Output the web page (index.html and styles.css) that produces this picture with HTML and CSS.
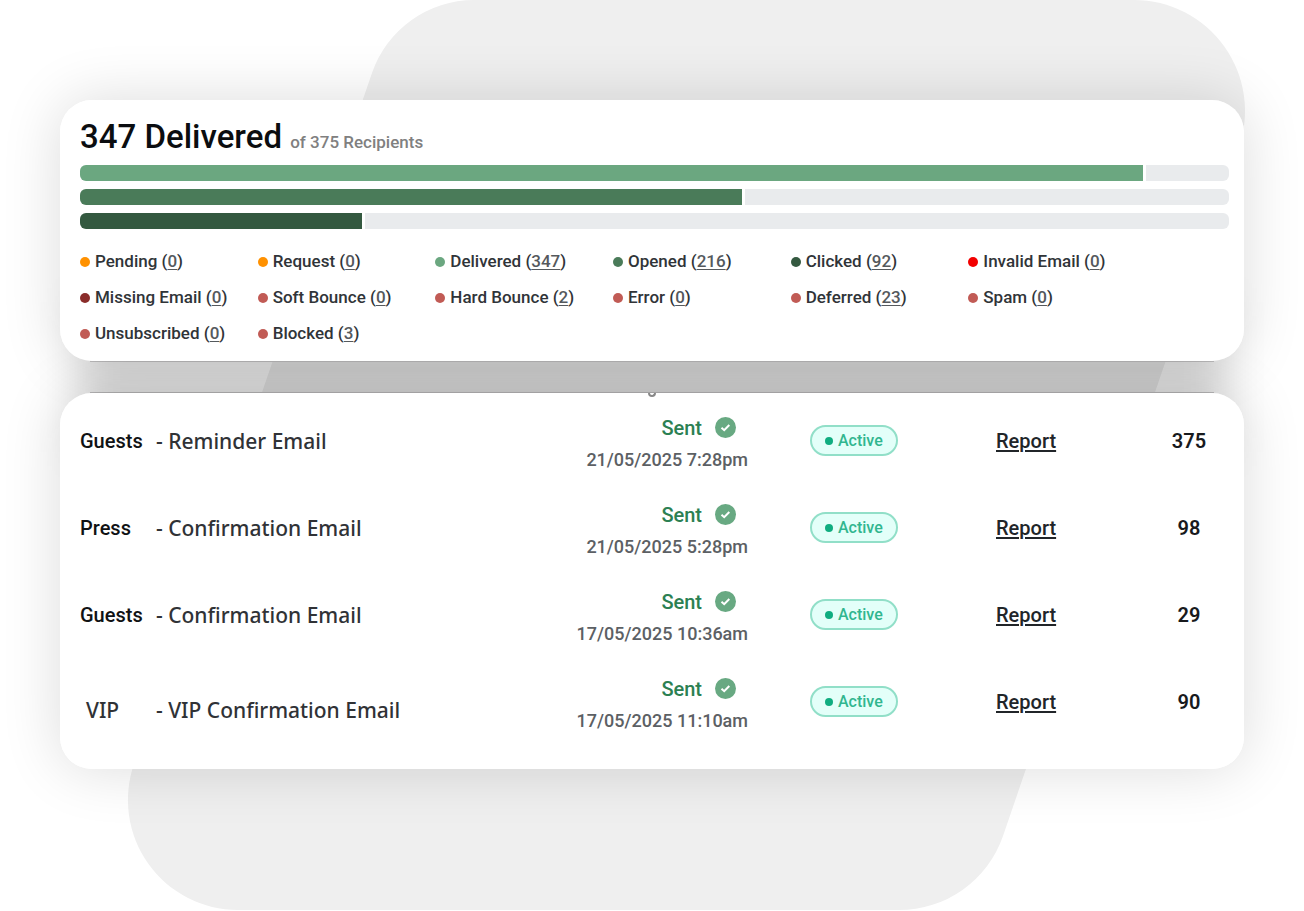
FILE: index.html
```html
<!DOCTYPE html>
<html lang="en">
<head>
    <meta charset="utf-8">
    <title>Email delivery report</title>
    <link rel="stylesheet" href="styles.css">
</head>
<body>
<div class="scene">
    <svg class="backdrop" viewBox="0 0 1304 911" preserveAspectRatio="none" aria-hidden="true">
        <path fill="#efefef" d="M474 0H1134A111 111 0 0 1 1239 147L1003 836A110 110 0 0 1 899 910H238A110 110 0 0 1 134 764L372 73A108 108 0 0 1 474 0Z"/>
    </svg>
    <main class="stack">
        <section class="card stats">
            <h1>347 Delivered <small>of 375 Recipients</small></h1>
            <div class="bars">
                <div class="bar"><div class="fill delivered" style="width:92.5%"></div></div>
                <div class="bar"><div class="fill opened" style="width:57.6%"></div></div>
                <div class="bar"><div class="fill clicked" style="width:24.5%"></div></div>
            </div>
            <ul class="legend">
                <li class="pending">Pending (<a href="#">0</a>)</li>
                <li class="pending">Request (<a href="#">0</a>)</li>
                <li class="delivered">Delivered (<a href="#">347</a>)</li>
                <li class="opened">Opened (<a href="#">216</a>)</li>
                <li class="clicked">Clicked (<a href="#">92</a>)</li>
                <li class="invalid">Invalid Email (<a href="#">0</a>)</li>
                <li class="missing">Missing Email (<a href="#">0</a>)</li>
                <li>Soft Bounce (<a href="#">0</a>)</li>
                <li>Hard Bounce (<a href="#">2</a>)</li>
                <li>Error (<a href="#">0</a>)</li>
                <li>Deferred (<a href="#">23</a>)</li>
                <li>Spam (<a href="#">0</a>)</li>
                <li>Unsubscribed (<a href="#">0</a>)</li>
                <li>Blocked (<a href="#">3</a>)</li>
            </ul>
        </section>
        <div class="gap"></div>
        <section class="card mails">
            <div class="tail"></div>
            <table>
                <tr>
                    <th scope="row">Guests</th>
                    <td class="subject">- Reminder Email</td>
                    <td class="sent">
                        <div class="state">Sent <svg viewBox="0 0 21 21"><circle cx="10.5" cy="10.5" r="10.5"/><path d="M6.5 10.8L9.2 13.2L14.3 8"/></svg></div>
                        <time>21/05/2025 7:28pm</time>
                    </td>
                    <td class="status"><span class="pill">Active</span></td>
                    <td class="report"><a href="#">Report</a></td>
                    <td class="count">375</td>
                </tr>
                <tr>
                    <th scope="row">Press</th>
                    <td class="subject">- Confirmation Email</td>
                    <td class="sent">
                        <div class="state">Sent <svg viewBox="0 0 21 21"><circle cx="10.5" cy="10.5" r="10.5"/><path d="M6.5 10.8L9.2 13.2L14.3 8"/></svg></div>
                        <time>21/05/2025 5:28pm</time>
                    </td>
                    <td class="status"><span class="pill">Active</span></td>
                    <td class="report"><a href="#">Report</a></td>
                    <td class="count">98</td>
                </tr>
                <tr>
                    <th scope="row">Guests</th>
                    <td class="subject">- Confirmation Email</td>
                    <td class="sent">
                        <div class="state">Sent <svg viewBox="0 0 21 21"><circle cx="10.5" cy="10.5" r="10.5"/><path d="M6.5 10.8L9.2 13.2L14.3 8"/></svg></div>
                        <time>17/05/2025 10:36am</time>
                    </td>
                    <td class="status"><span class="pill">Active</span></td>
                    <td class="report"><a href="#">Report</a></td>
                    <td class="count">29</td>
                </tr>
                <tr class="vip">
                    <th scope="row">VIP</th>
                    <td class="subject">- VIP Confirmation Email</td>
                    <td class="sent">
                        <div class="state">Sent <svg viewBox="0 0 21 21"><circle cx="10.5" cy="10.5" r="10.5"/><path d="M6.5 10.8L9.2 13.2L14.3 8"/></svg></div>
                        <time>17/05/2025 11:10am</time>
                    </td>
                    <td class="status"><span class="pill">Active</span></td>
                    <td class="report"><a href="#">Report</a></td>
                    <td class="count">90</td>
                </tr>
            </table>
        </section>
    </main>
</div>
</body>
</html>
```
FILE: styles.css
```css
* {
    box-sizing: border-box;
}
body {
    margin: 0;
    background: #fff;
    font-family: Roboto, "Liberation Sans", sans-serif;
    font-weight: 500;
    color: #212529;
}
a {
    color: inherit;
    text-underline-offset: 2px;
}
.scene {
    position: relative;
    min-height: 100vh;
    padding: 100px 60px 140px;
    overflow: hidden;
}
.backdrop {
    position: absolute;
    left: 0;
    top: 0;
    width: 100%;
    height: 100%;
}
.stack {
    position: relative;
    z-index: 0;
}
.card {
    position: relative;
    border-radius: 32px;
    background: #fff;
}
/* shadow sits behind both cards */
.card::before {
    content: "";
    position: absolute;
    z-index: -1;
    inset: 0;
    border-radius: 32px;
    box-shadow: 0 0 60px rgba(0,0,0,.14);
}
.gap {
    position: relative;
    z-index: -1;
    height: 32px;
    margin: 0 30px;
    border: solid #c8c7c8;
    border-width: 1px 0;
}
.gap::before {
    content: "";
    position: absolute;
    inset: -60px -10px;
    background: rgba(0,0,0,.13);
    filter: blur(20px);
}

.stats {
    padding: 16px 15px 10px 20px;
}
h1 {
    margin: 0;
    font-size: 33px;
    line-height: 42px;
    font-weight: 500;
    color: #0b0d10;
}
small {
    font-size: 17px;
    color: #808080;
}
.bars {
    display: grid;
    gap: 8px;
    margin-top: 2px;
}
.bar {
    height: 16px;
    border-radius: 6px;
    overflow: hidden;
    background: #e9ebed;
}
.fill {
    height: 100%;
    background: var(--c);
    box-shadow: 3px 0 #fff;
}
.legend {
    display: grid;
    grid-template-columns: repeat(6, 1fr);
    margin: 14px 0 0;
    padding: 0 83px 0 0;
    list-style: none;
    font-size: 17px;
    line-height: 36px;
    white-space: nowrap;
    color: #303438;
}
.legend a {
    color: #55595d;
}
.legend li {
    --c: #c15b55;
}
.legend li::before {
    content: "";
    display: inline-block;
    width: 10px;
    height: 10px;
    margin-right: 5px;
    border-radius: 50%;
    background: var(--c);
}
.fill.delivered, .legend .delivered {
    --c: #6ba780;
}
.fill.opened, .legend .opened {
    --c: #4a7b59;
}
.fill.clicked, .legend .clicked {
    --c: #345940;
}
.legend .pending {
    --c: #ff9100;
}
.legend .invalid {
    --c: #f20000;
}
.legend .missing {
    --c: #8a2c2a;
}

.mails {
    padding-bottom: 24px;
}
/* remains of the row scrolled away above */
.tail {
    width: 8px;
    height: 4px;
    margin: 0 auto;
    border: 2px solid #888;
    border-top: 0;
    border-radius: 0 0 4px 4px;
}
table {
    width: calc(100% - 20px);
    margin-left: 20px;
    border-collapse: collapse;
    table-layout: fixed;
    white-space: nowrap;
}
tr {
    height: 87px;
}
th, td {
    padding: 0;
    text-align: left;
    font-size: 20px;
    font-weight: 500;
}
th {
    width: 76px;
    color: #101214;
}
.subject, .vip th {
    font-family: "Noto Sans", "Open Sans", sans-serif;
    font-size: 21px;
    color: #303236;
}
.vip th, .vip .subject {
    padding-top: 16px;
}
.vip th {
    padding-left: 6px;
}
.sent {
    width: 200px;
    padding-top: 6px;
    text-align: right;
}
.state {
    display: flex;
    justify-content: flex-end;
    align-items: center;
    gap: 13px;
    margin-bottom: 6px;
    padding-right: 12px;
    line-height: 26px;
    color: #2c8052;
}
.state svg {
    width: 21px;
    height: 21px;
    fill: #68a982;
}
.state path {
    fill: none;
    stroke: #fff;
    stroke-width: 2;
}
time {
    display: block;
    font-size: 18px;
    line-height: 26px;
    color: #5c6064;
}
.status {
    width: 248px;
    padding-left: 62px;
}
.pill {
    display: inline-flex;
    align-items: center;
    gap: 5px;
    height: 31px;
    padding: 0 13px;
    border: 2px solid #91dfc8;
    border-radius: 16px;
    background: #e3fff9;
    font-size: 16px;
    color: #31b68f;
    vertical-align: middle;
}
.pill::before {
    content: "";
    width: 8px;
    height: 8px;
    border-radius: 50%;
    background: #10ad80;
}
.report {
    width: 138px;
}
.count {
    width: 110px;
    text-align: center;
    font-weight: 600;
    color: #181a1d;
}
```
